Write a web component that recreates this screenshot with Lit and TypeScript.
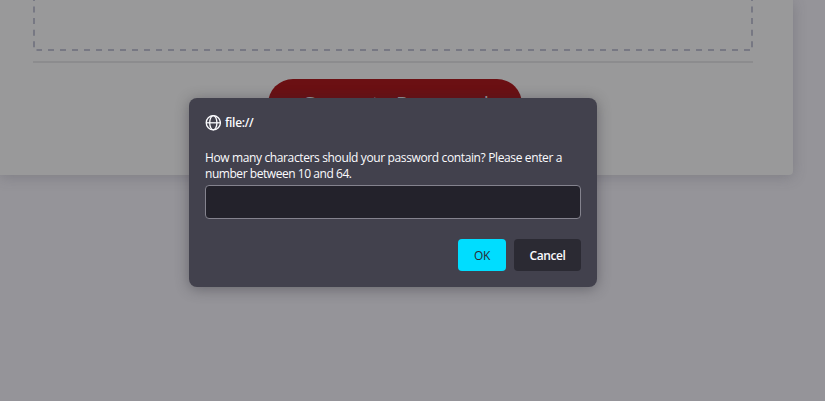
import { LitElement, html, css } from "lit";
import { customElement } from "lit/decorators.js";

@customElement("password-card")
class PasswordCard extends LitElement {
  static styles = css`
    :host {
      display: block;
      box-sizing: border-box;
      width: 793px;
      height: 175px;
      padding: 0 40px 0 33px;
      background: #99999a;
      border-radius: 0 0 4px 0;
      box-shadow: 0 2px 14px rgba(70, 68, 80, 0.28);
    }
    .frame {
      display: block;
      width: 720px;
      height: 51px;
    }
    .rule {
      height: 2px;
      margin-top: 10px;
      background: #8c8c8e;
    }
    .generate {
      display: flex;
      justify-content: center;
      box-sizing: border-box;
      width: 254px;
      height: 50px;
      margin: 16px 0 0 235px;
      padding-top: 9px;
      border-radius: 25px;
      background: #6b1013;
      color: #99999a;
      font: 20.8px/30px "Open Sans", sans-serif;
      letter-spacing: -0.1px;
      white-space: nowrap;
    }
  `;
  render() {
    return html`
      <svg class="frame" viewBox="0 0 720 51" fill="none" stroke="#777883" stroke-width="2">
        <path d="M3.5 50H717" stroke-dasharray="6 6" stroke-dashoffset="0.5" />
        <path d="M1 47.3V0M719 47.3V0" stroke-dasharray="6 5.6" />
      </svg>
      <div class="rule"></div>
      <div class="generate"><span>Generate Password</span></div>
    `;
  }
}

@customElement("prompt-dialog")
class PromptDialog extends LitElement {
  static styles = css`
    :host {
      position: absolute;
      left: 189px;
      top: 98px;
      box-sizing: border-box;
      width: 408px;
      height: 189px;
      padding: 16px;
      border-radius: 8px;
      background: #42414d;
      box-shadow: 0 2px 14px rgba(40, 39, 48, 0.42);
      color: #fbfbfe;
      font: 12px/16px "Open Sans", "Noto Sans", sans-serif;
    }
    .origin {
      display: flex;
      align-items: center;
      gap: 4px;
      height: 17px;
      font-weight: 600;
      letter-spacing: -0.3px;
    }
    .globe {
      width: 16px;
      height: 16px;
    }
    .message {
      margin-top: 19px;
      white-space: nowrap;
      letter-spacing: -0.37px;
    }
    .line {
      display: block;
    }
    .line + .line {
      letter-spacing: -0.45px;
    }
    .field {
      display: block;
      box-sizing: border-box;
      width: 376px;
      height: 34px;
      margin: 3px 0 20px;
      padding: 0 8px;
      border: 1px solid #84838e;
      border-radius: 4px;
      background: #23222b;
      color: #fbfbfe;
      font: inherit;
      outline: none;
    }
    .actions {
      display: flex;
      justify-content: flex-end;
      gap: 8px;
    }
    button {
      height: 32px;
      padding: 1px 0 0;
      border: 0;
      border-radius: 4px;
      font: 600 12px/16px "Open Sans", sans-serif;
      letter-spacing: -0.4px;
    }
    .ok {
      width: 48px;
      background: #00ddff;
      color: #2b2a33;
      font-weight: 500;
    }
    .cancel {
      width: 67px;
      background: #2b2a33;
      color: #fbfbfe;
    }
  `;
  render() {
    return html`
      <div class="origin">
        <svg class="globe" viewBox="0 0 16 16" fill="none" stroke="#fbfbfe" stroke-width="1.3">
          <circle cx="8.3" cy="7.8" r="7.1" />
          <ellipse cx="8.3" cy="7.8" rx="3.6" ry="7.1" />
          <path d="M1.2 7.8h14.2" />
        </svg>
        <span>file://</span>
      </div>
      <div class="message">
        <span class="line">How many characters should your password contain? Please enter a</span>
        <span class="line">number between 10 and 64.</span>
      </div>
      <input class="field" type="text" />
      <div class="actions">
        <button class="ok">OK</button>
        <button class="cancel">Cancel</button>
      </div>
    `;
  }
}

@customElement("app-root")
class AppRoot extends LitElement {
  static styles = css`
    :host {
      display: block;
      position: relative;
      width: 825px;
      height: 401px;
      overflow: hidden;
      background: #959499;
    }
  `;
  render() {
    return html`<password-card></password-card><prompt-dialog></prompt-dialog>`;
  }
}
